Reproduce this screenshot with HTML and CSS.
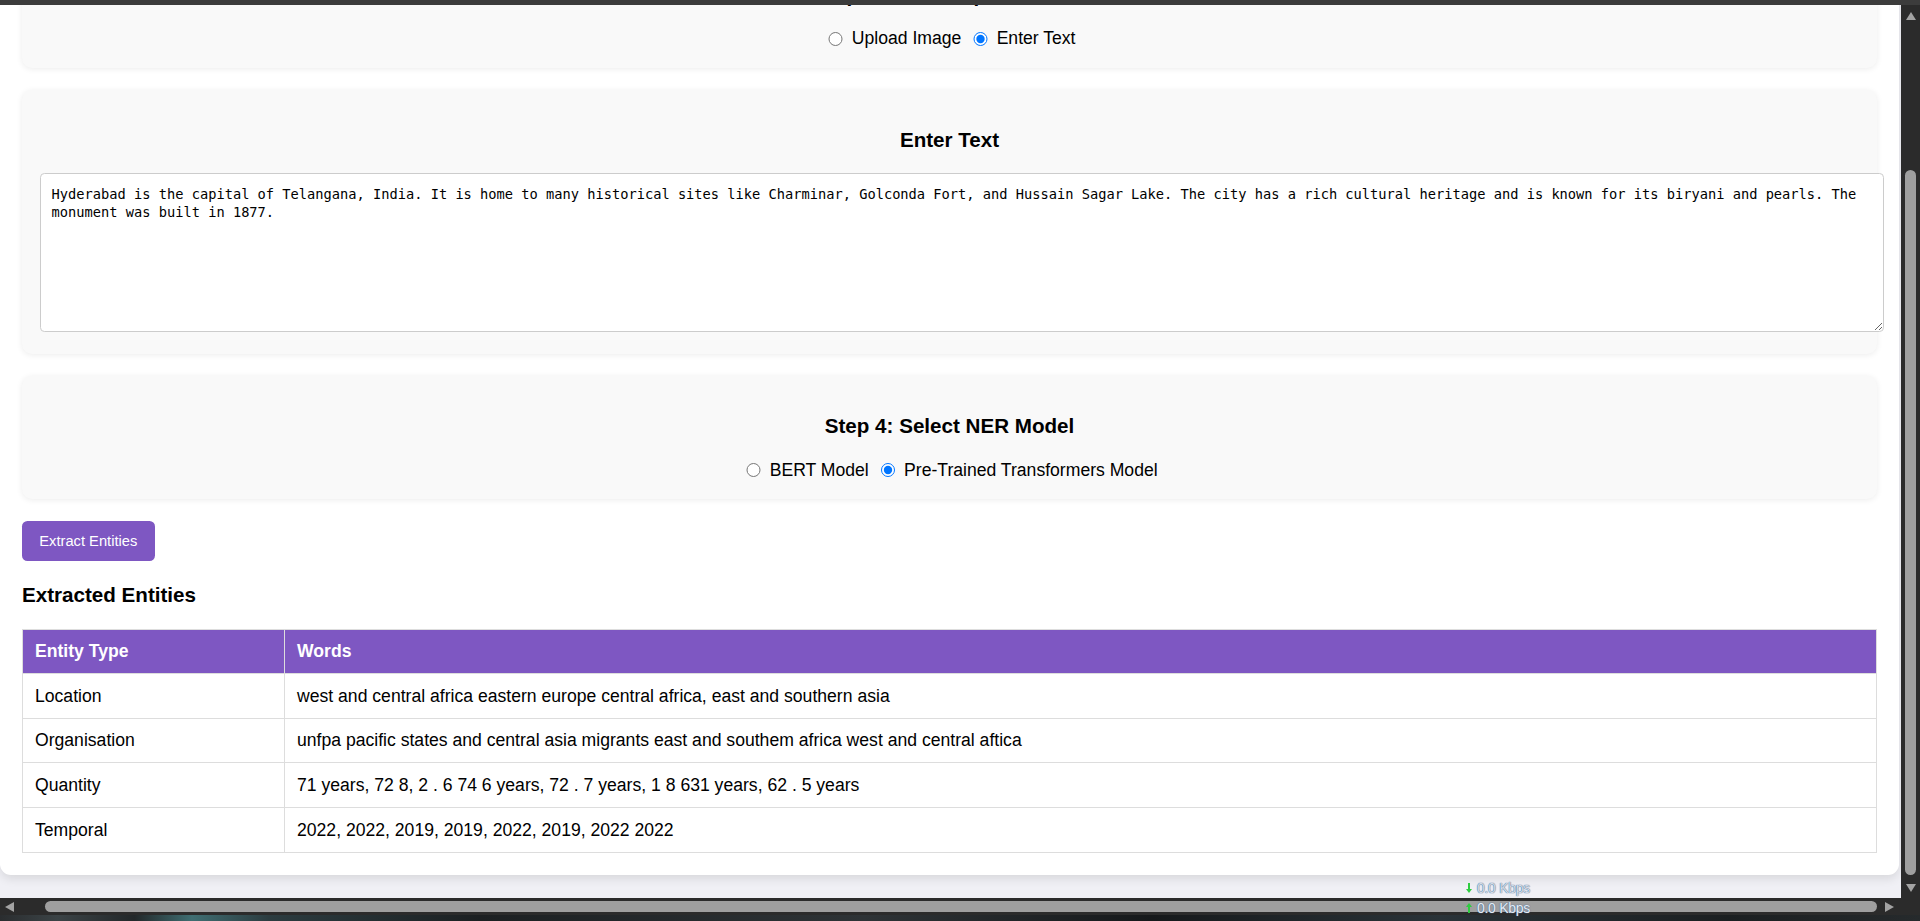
FILE: index.html
```html
<!DOCTYPE html>
<html lang="en">
<head>
<meta charset="utf-8">
<title>NER Extraction</title>
<link rel="stylesheet" href="styles.css">
</head>
<body>
<div class="window">
  <div class="topbar"></div>
  <div class="main">
    <div class="viewport">
      <div class="container">
        <section class="card">
          <h3 class="card-title">Step 2: Select Input Method</h3>
          <div class="options">
            <label class="opt"><input type="radio" name="input-type"><span>Upload Image</span></label>
            <label class="opt"><input type="radio" name="input-type" checked><span>Enter Text</span></label>
          </div>
        </section>
        <section class="card">
          <h3 class="card-title">Enter Text</h3>
          <textarea class="text-input">Hyderabad is the capital of Telangana, India. It is home to many historical sites like Charminar, Golconda Fort, and Hussain Sagar Lake. The city has a rich cultural heritage and is known for its biryani and pearls. The monument was built in 1877.</textarea>
        </section>
        <section class="card">
          <h3 class="card-title">Step 4: Select NER Model</h3>
          <div class="options">
            <label class="opt"><input type="radio" name="model"><span>BERT Model</span></label>
            <label class="opt"><input type="radio" name="model" checked><span>Pre-Trained Transformers Model</span></label>
          </div>
        </section>
        <button class="extract" type="button">Extract Entities</button>
        <h3 class="result-title">Extracted Entities</h3>
        <table class="entities">
          <colgroup><col class="col-type"><col></colgroup>
          <thead>
            <tr><th>Entity Type</th><th>Words</th></tr>
          </thead>
          <tbody>
            <tr><td>Location</td><td>west and central africa eastern europe central africa, east and southern asia</td></tr>
            <tr><td>Organisation</td><td>unfpa pacific states and central asia migrants east and southem africa west and central aftica</td></tr>
            <tr><td>Quantity</td><td>71 years, 72 8, 2 . 6 74 6 years, 72 . 7 years, 1 8 631 years, 62 . 5 years</td></tr>
            <tr><td>Temporal</td><td>2022, 2022, 2019, 2019, 2022, 2019, 2022 2022</td></tr>
          </tbody>
        </table>
      </div>
    </div>
    <div class="vscroll">
      <span class="arrow arrow-up"></span>
      <span class="vthumb"></span>
      <span class="arrow arrow-down"></span>
    </div>
  </div>
  <div class="hscroll">
    <span class="arrow arrow-left"></span>
    <span class="hthumb"></span>
    <span class="arrow arrow-right"></span>
  </div>
  <div class="desktop"></div>
  <div class="netmeter">
    <div class="net-line net-down">
      <svg class="net-arrow" width="6" height="10" viewBox="0 0 6 10"><path d="M2 0h2v6h2L3 10 0 6h2z" fill="#2ecc40"/></svg>
      <span class="net-text">0.0 Kbps</span>
    </div>
    <div class="net-line">
      <svg class="net-arrow" width="6" height="10" viewBox="0 0 6 10"><path d="M2 10h2V4h2L3 0 0 4h2z" fill="#2ecc40"/></svg>
      <span class="net-text">0.0 Kbps</span>
    </div>
  </div>
</div>
</body>
</html>
```
FILE: styles.css
```css
* { box-sizing: border-box; }

html, body {
  margin: 0;
  padding: 0;
  width: 1920px;
  height: 921px;
  overflow: hidden;
  font-family: "Liberation Sans", Arial, sans-serif;
  color: #000;
}

.window {
  position: relative;
  width: 1920px;
  height: 921px;
  display: flex;
  flex-direction: column;
  background: #2b2b2b;
}

.topbar {
  height: 5px;
  background: #3c3c3c;
  flex: none;
  position: relative;
  z-index: 1;
}

.main {
  height: 893px;
  display: flex;
  flex: none;
}

.viewport {
  width: 1901px;
  height: 893px;
  overflow: hidden;
  background: #f0f0f5;
}

.container {
  width: 1899px;
  margin-top: -82px;
  background: #ffffff;
  border-radius: 11px;
  padding: 22px;
  box-shadow: 0 4px 10px rgba(0, 0, 0, 0.1);
}

.card {
  background: #f9f9f9;
  border-radius: 10px;
  padding: 17.6px;
  margin-bottom: 22px;
  box-shadow: 0 1px 6px rgba(0, 0, 0, 0.08);
  text-align: center;
}

.card-title {
  font-size: 20.6px;
  line-height: 23.7px;
  font-weight: bold;
  margin: 20.6px 0;
}

.options {
  height: 23px;
  display: flex;
  justify-content: center;
  align-items: center;
  gap: 12px;
  padding-left: 5px;
  font-size: 17.6px;
}

.opt {
  display: inline-flex;
  align-items: center;
  gap: 9px;
}

.opt input {
  width: 14.3px;
  height: 14.3px;
  margin: 0;
}

.text-input {
  display: block;
  width: calc(100% + 25px);
  height: 159.4px;
  margin: 1.8px 0 4.7px 0;
  padding: 11px;
  border: 1px solid #cccccc;
  border-radius: 4.4px;
  background: #ffffff;
  font-family: "DejaVu Sans Mono", "Liberation Mono", monospace;
  font-size: 13.7px;
  line-height: 18px;
  color: #000;
  text-align: left;
  resize: vertical;
}

.extract {
  display: block;
  height: 40px;
  padding: 0 17.3px;
  border: none;
  border-radius: 5.5px;
  background: #7e57c2;
  color: #ffffff;
  font-family: "Liberation Sans", Arial, sans-serif;
  font-size: 14.7px;
}

.result-title {
  font-size: 20.6px;
  line-height: 23.7px;
  font-weight: bold;
  margin: 22px 0 21.6px 0;
}

.entities {
  width: 100%;
  border-collapse: collapse;
  table-layout: fixed;
  font-size: 17.6px;
  line-height: 20.2px;
}

.col-type { width: 262px; }

.entities th,
.entities td {
  border: 1px solid #dddddd;
  padding: 11.7px 12px;
  text-align: left;
}

.entities th {
  background: #7e57c2;
  color: #ffffff;
  font-weight: bold;
}

.vscroll {
  width: 19px;
  height: 893px;
  background: #2b2b2b;
  display: flex;
  flex-direction: column;
  align-items: center;
  padding-top: 7px;
}

.arrow {
  display: block;
  width: 0;
  height: 0;
  flex: none;
}

.arrow-up {
  border-left: 5px solid transparent;
  border-right: 5px solid transparent;
  border-bottom: 8px solid #a3a3a3;
}

.arrow-down {
  margin-top: 9px;
  border-left: 5px solid transparent;
  border-right: 5px solid transparent;
  border-top: 8px solid #a3a3a3;
}

.vthumb {
  display: block;
  margin-top: 150px;
  width: 11px;
  height: 705px;
  border-radius: 6px;
  background: #9f9f9f;
  flex: none;
}

.hscroll {
  height: 17px;
  flex: none;
  display: flex;
  align-items: center;
  padding-left: 5px;
  background: #2b2b2b;
}

.arrow-left {
  border-top: 5px solid transparent;
  border-bottom: 5px solid transparent;
  border-right: 9px solid #a3a3a3;
}

.arrow-right {
  margin-left: 8px;
  border-top: 5px solid transparent;
  border-bottom: 5px solid transparent;
  border-left: 9px solid #a3a3a3;
}

.hthumb {
  display: block;
  margin-left: 31px;
  width: 1832px;
  height: 11px;
  border-radius: 6px;
  background: #9f9f9f;
}

.desktop {
  height: 6px;
  flex: none;
  background: linear-gradient(90deg, #2a2d2f 0%, #3b4346 3%, #23282a 7%, #3f6e72 10%, #2c3c40 14%, #1c2022 25%, #2e3336 45%, #16191b 60%, #2a3338 75%, #1b1f21 90%, #262a2c 100%);
}

.netmeter {
  position: absolute;
  left: 1466px;
  top: 878px;
  font-family: "Liberation Sans", Arial, sans-serif;
  font-size: 14px;
  line-height: 20px;
}

.net-line {
  display: flex;
  align-items: center;
  gap: 5px;
}

.net-arrow {
  display: block;
  flex: none;
}

.net-text {
  color: #e6ecf3;
  letter-spacing: -0.3px;
  text-shadow: 0 0 1px #4a6f9a, 0 0 1px #4a6f9a;
}

.net-down .net-text {
  color: #d5dde7;
}
```
